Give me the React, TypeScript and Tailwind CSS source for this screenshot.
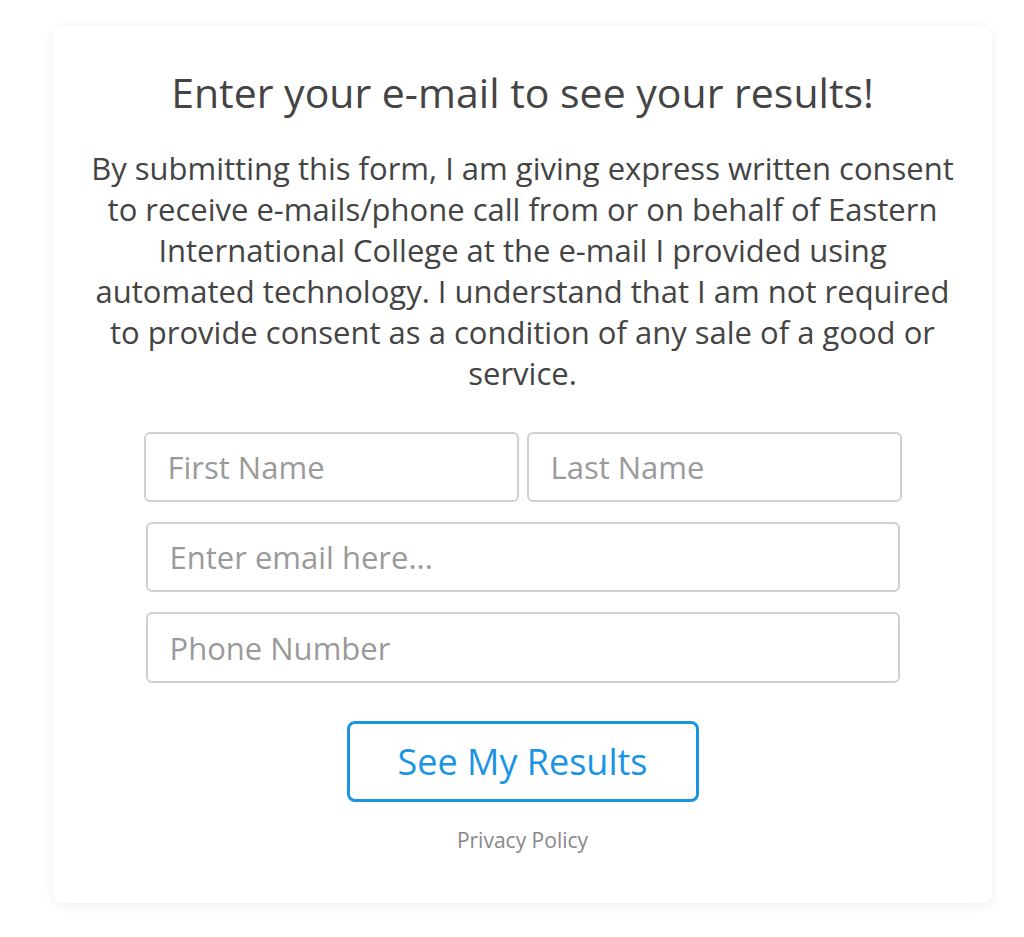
export default function App() {
  const inputCls =
    "h-[70px] rounded-[6px] border-2 border-[#d0d0d0] px-[22px] text-[31px] text-[#444] placeholder:text-[#9a9a9a] outline-none bg-white";
  return (
    <div className="min-h-[937px] bg-white pt-[26px] pl-[53px] pr-[32px]" style={{ fontFamily: '"Open Sans", Lato, sans-serif' }}>
      <div className="w-[939px] h-[877px] rounded-[10px] bg-white shadow-[0_2px_12px_rgba(0,0,0,0.08)] flex flex-col items-center">
        <h1 className="mt-[40px] text-[41px] leading-[52px] text-[#444] font-normal tracking-[0px]">Enter your e-mail to see your results!</h1>
        <p className="mt-[30px] w-[900px] text-center text-[31px] leading-[41px] text-[#444]">
          By submitting this form, I am giving express written consent
          <br />
          to receive e-mails/phone call from or on behalf of Eastern
          <br />
          International College at the e-mail I provided using
          <br />
          automated technology. I understand that I am not required
          <br />
          to provide consent as a condition of any sale of a good or
          <br />
          service.
        </p>
        <div className="mt-[38px] w-[758px] flex flex-col items-center gap-[20px]">
          <div className="flex gap-[8px] w-[758px]">
            <input className={`w-[375px] ${inputCls}`} placeholder="First Name" />
            <input className={`w-[375px] ${inputCls}`} placeholder="Last Name" />
          </div>
          <input className={`w-[754px] ${inputCls}`} placeholder="Enter email here..." />
          <input className={`w-[754px] ${inputCls} h-[71px]`} placeholder="Phone Number" />
        </div>
        <button className="mt-[38px] w-[352px] h-[81px] rounded-[8px] border-[3px] border-[#1a94e3] text-[#1a94e3] text-[36px] bg-white">See My Results</button>
        <div className="mt-[24px] text-[21px] leading-[28px] text-[#888]">Privacy Policy</div>
      </div>
    </div>
  );
}
